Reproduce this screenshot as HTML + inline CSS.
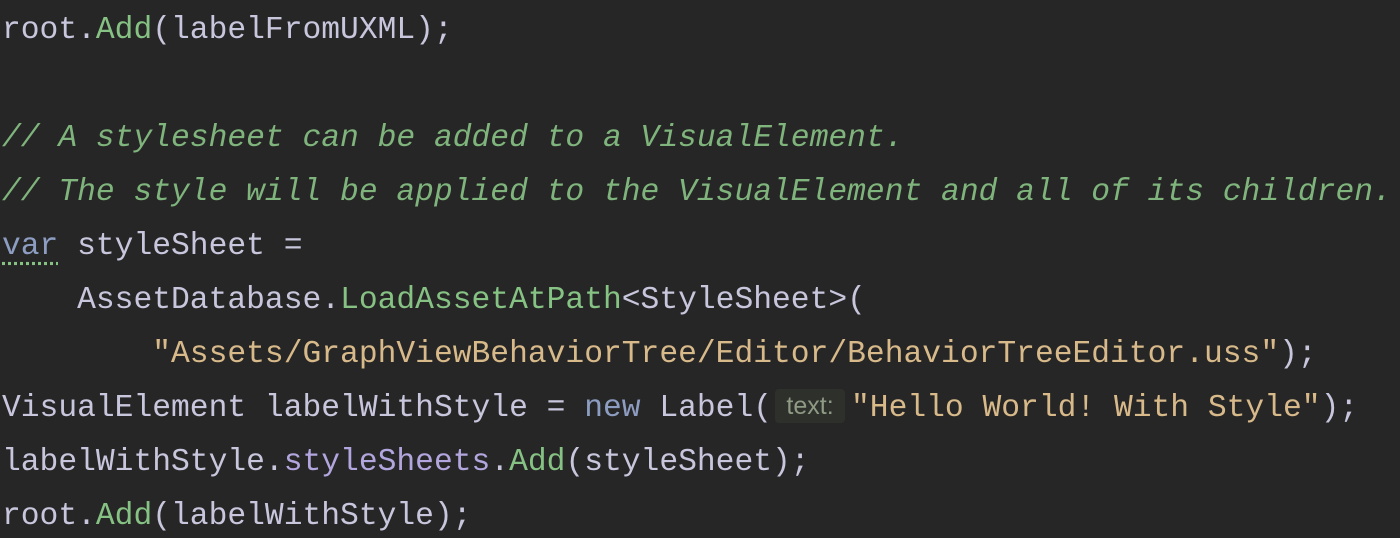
<!DOCTYPE html>
<html><head><meta charset="utf-8"><style>
html,body{margin:0;padding:0;background:#262626;width:1400px;height:538px;overflow:hidden}
pre{margin:0;padding:4px 0 0 2px;font-family:"Liberation Mono",monospace;font-size:31.3px;line-height:54px;color:#c8c6dc;white-space:pre}
.c{color:#7fb47c;font-style:italic}
.k{color:#8d9dc2}
.m{color:#86c283}
.s{color:#d8b98a}
.p{color:#b3a6df}
.h{display:inline-block;box-sizing:border-box;width:70px;text-align:center;font-family:"Liberation Sans",sans-serif;font-size:25px;line-height:34px;color:#8e9a84;background:#2e302c;border-radius:4px;margin:0 6px 0 3px;vertical-align:2px}
.u{text-decoration:underline dotted #86c283;text-underline-offset:8px}
</style></head><body><pre>root.<span class="m">Add</span>(labelFromUXML);

<span class="c">// A stylesheet can be added to a VisualElement.</span>
<span class="c">// The style will be applied to the VisualElement and all of its children.</span>
<span class="k u">var</span> styleSheet =
    AssetDatabase.<span class="m">LoadAssetAtPath</span>&lt;StyleSheet&gt;(
        <span class="s">"Assets/GraphViewBehaviorTree/Editor/BehaviorTreeEditor.uss"</span>);
VisualElement labelWithStyle = <span class="k">new</span> Label(<span class="h">text:</span><span class="s">"Hello World! With Style"</span>);
labelWithStyle.<span class="p">styleSheets</span>.<span class="m">Add</span>(styleSheet);
root.<span class="m">Add</span>(labelWithStyle);</pre></body></html>
